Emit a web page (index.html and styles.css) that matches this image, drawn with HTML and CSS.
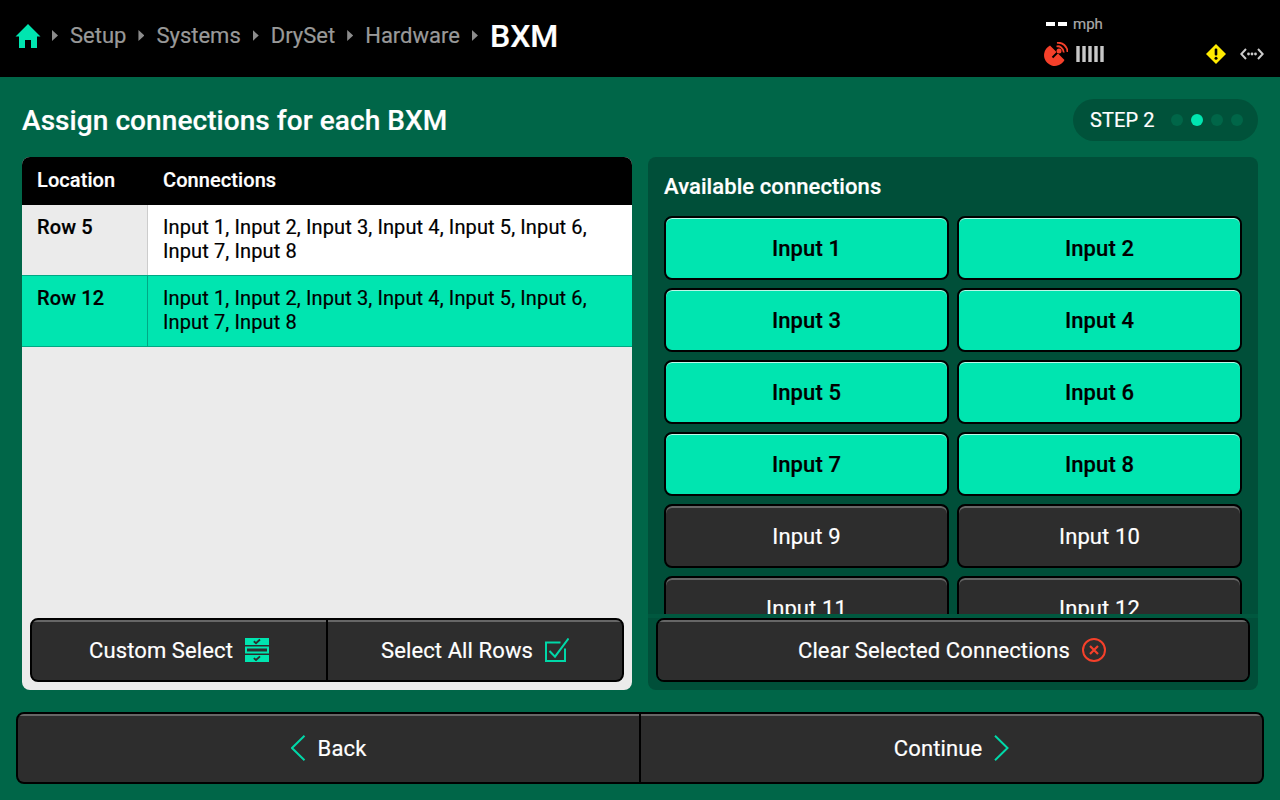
FILE: index.html
```html
<!DOCTYPE html>
<html lang="en">
<head>
<meta charset="utf-8">
<title>Assign connections</title>
<link rel="stylesheet" href="styles.css">
</head>
<body>
<div class="app">
  <header class="topbar">
    <nav class="crumbs">
      <svg class="home" viewBox="0 0 26 26" width="26" height="26"><path d="M13 1 L25.500 13.600 H22 V25 H16 V17 H10 V25 H4 V13.600 H.5 Z" fill="#00e5b0"/></svg>
      <i class="caret"></i><span class="crumb">Setup</span>
      <i class="caret"></i><span class="crumb">Systems</span>
      <i class="caret"></i><span class="crumb">DrySet</span>
      <i class="caret"></i><span class="crumb">Hardware</span>
      <i class="caret"></i><span class="crumb-current">BXM</span>
    </nav>
    <div class="status">
      <div class="gps">
        <div class="speed"><span class="dashes"><i></i><i></i></span><span>mph</span></div>
        <div class="signal">
          <svg viewBox="0 0 24 24" width="24" height="24"><path d="M6 3.500 A10.800 10.800 0 1 0 20.500 18 Z" fill="#f5402a"/><path d="M8.500 15.500 L14.500 9.500" stroke="#000" stroke-width="2"/><circle cx="15" cy="9" r="2.500" fill="#f5402a"/><path d="M12.500 4.500 C15.500 3.500 19.500 6 19.800 10.500" fill="none" stroke="#f5402a" stroke-width="1.800"/><path d="M13 .9 C18.500 0 23.500 4.500 23.500 10" fill="none" stroke="#f5402a" stroke-width="1.800"/></svg>
          <svg class="bars" viewBox="0 0 28 16" width="28" height="16"><rect x=".3" width="3.400" height="16"/><rect x="6.300" width="3.400" height="16"/><rect x="12.300" width="3.400" height="16"/><rect x="18.300" width="3.400" height="16"/><rect x="24.300" width="3.400" height="16"/></svg>
        </div>
      </div>
      <svg class="warn" viewBox="0 0 20 20" width="20" height="20"><path d="M10 0 L20 10 L10 20 L0 10 Z" fill="#ffeb00"/><rect x="8.700" y="4.500" width="2.600" height="7" rx="1" fill="#000"/><circle cx="10" cy="14.200" r="1.500" fill="#000"/></svg>
      <svg class="link" viewBox="0 0 24 12" width="24" height="12"><path d="M6 1 L1.300 6 L6 11 M18 1 L22.700 6 L18 11" fill="none" stroke="#ccc" stroke-width="2"/><circle cx="8.500" cy="6" r="1.400" fill="#ccc"/><circle cx="12" cy="6" r="1.400" fill="#ccc"/><circle cx="15.500" cy="6" r="1.400" fill="#ccc"/></svg>
    </div>
  </header>

  <main class="content">
    <div class="title-row">
      <h1 class="title">Assign connections for each BXM</h1>
      <div class="step"><span>STEP 2</span><span class="dots"><i></i><i class="on"></i><i></i><i></i></span></div>
    </div>
    <div class="panels">
      <section class="panel panel-left">
        <div class="thead"><div class="cell-a">Location</div><div class="cell-b">Connections</div></div>
        <div class="row">
          <div class="cell-a loc">Row 5</div>
          <div class="cell-b">Input 1, Input 2, Input 3, Input 4, Input 5, Input 6,<br>Input 7, Input 8</div>
        </div>
        <div class="row row-on">
          <div class="cell-a loc">Row 12</div>
          <div class="cell-b">Input 1, Input 2, Input 3, Input 4, Input 5, Input 6,<br>Input 7, Input 8</div>
        </div>
        <div class="spacer"></div>
        <div class="btn-group">
          <button class="btn">Custom Select
            <svg viewBox="0 0 24 24" width="24" height="24"><rect y="0" width="24" height="7" fill="#00e5b0"/><rect y="8.500" width="24" height="7" fill="#00e5b0"/><rect x="2" y="10.500" width="20" height="3" fill="#2d2d2d"/><rect y="17" width="24" height="7" fill="#00e5b0"/><path d="M8.800 3.300 L11 5.200 L15 1.500 M8.800 20.100 L11 22 L15 18.300" fill="none" stroke="#2d2d2d" stroke-width="1.800"/></svg>
          </button>
          <button class="btn">Select All Rows
            <svg viewBox="0 0 24 24" width="24" height="24"><path d="M20 10.500 V23 H1 V4.500 H15.500" fill="none" stroke="#00d8a8" stroke-width="2"/><path d="M4.500 13 L10 18.700 L23.500 .5" fill="none" stroke="#00d8a8" stroke-width="2"/></svg>
          </button>
        </div>
      </section>
      <section class="panel panel-right">
        <h2 class="avail">Available connections</h2>
        <div class="scroller">
          <div class="grid">
            <button class="tile tile-on">Input 1</button><button class="tile tile-on">Input 2</button>
            <button class="tile tile-on">Input 3</button><button class="tile tile-on">Input 4</button>
            <button class="tile tile-on">Input 5</button><button class="tile tile-on">Input 6</button>
            <button class="tile tile-on">Input 7</button><button class="tile tile-on">Input 8</button>
            <button class="tile">Input 9</button><button class="tile">Input 10</button>
            <button class="tile">Input 11</button><button class="tile">Input 12</button>
          </div>
        </div>
        <div class="btn-group">
          <button class="btn btn-clear">Clear Selected Connections
            <svg viewBox="0 0 24 24" width="24" height="24"><circle cx="12" cy="12" r="11" fill="none" stroke="#f5402a" stroke-width="2"/><path d="M8 8 L16 16 M16 8 L8 16" stroke="#f5402a" stroke-width="2.200"/></svg>
          </button>
        </div>
      </section>
    </div>
  </main>

  <footer class="footer">
    <button class="btn btn-lg">
      <svg viewBox="0 0 16 26" width="16" height="26"><path d="M13.500 .8 L1 13 L13.500 25.200" fill="none" stroke="#00d8a8" stroke-width="2"/></svg>
      Back
    </button>
    <button class="btn btn-lg">Continue
      <svg viewBox="0 0 16 26" width="16" height="26"><path d="M2 .8 L14.500 13 L2 25.200" fill="none" stroke="#00d8a8" stroke-width="2"/></svg>
    </button>
  </footer>
</div>
</body>
</html>
```
FILE: styles.css
```css
* { box-sizing: border-box; }
html, body { margin: 0; padding: 0; }
body { font-family: Roboto, "Liberation Sans", sans-serif; background: #006648; color: #fff; letter-spacing: .005em; -webkit-text-stroke: .2px; }
.app { width: 1280px; height: 800px; display: flex; flex-direction: column; overflow: hidden; }

.topbar { height: 77px; flex: none; background: #000; display: flex; justify-content: space-between; padding: 0 16px 0 15px; }
.crumbs { display: flex; align-items: center; height: 71px; letter-spacing: 0; }
.home { margin-right: 11px; }
.caret { width: 6px; height: 11px; background: #8c8c8c; clip-path: polygon(0 0, 100% 50%, 0 100%); margin-right: 12px; }
.crumb { font-size: 22px; color: #999; margin-right: 12px; }
.crumb-current { font-size: 32px; font-weight: 500; color: #fff; }

.status { display: flex; align-items: flex-end; padding-bottom: 11px; }
.gps { display: flex; flex-direction: column; gap: 8px; margin-right: 102px; }
.speed { display: flex; align-items: center; font-size: 15px; color: #aaa; padding-left: 2px; height: 20px; letter-spacing: 0; }
.dashes { display: flex; gap: 3px; margin-right: 6px; }
.dashes i { width: 9px; height: 4px; background: #fff; }
.signal { display: flex; align-items: center; gap: 8px; height: 24px; }
.bars { fill: #c8c8c8; }
.warn { margin-right: 14px; margin-bottom: 2px; }
.link { margin-bottom: 6px; }

.content { flex: 1; padding: 0 22px; display: flex; flex-direction: column; }
.title-row { height: 80px; display: flex; align-items: center; justify-content: space-between; padding-top: 6px; }
.title { margin: 0; font-size: 28px; font-weight: 500; letter-spacing: .07px; }
.step { width: 185px; height: 42px; border-radius: 21px; background: #00523a; display: flex; align-items: center; padding: 0 15px 0 17px; justify-content: space-between; font-size: 20px; }
.dots { display: flex; gap: 8px; }
.dots i { width: 12px; height: 12px; border-radius: 50%; background: #006648; }
.dots .on { background: #00e5b0; }

.panels { display: grid; grid-template-columns: 610px 610px; gap: 16px; height: 533px; }
.panel { border-radius: 8px; display: flex; flex-direction: column; overflow: hidden; }
.panel-left { background: #ebebeb; color: #000; }
.panel-right { background: #004f39; }

.thead { height: 48px; background: #000; color: #fff; display: flex; align-items: center; font-size: 20px; font-weight: 500; flex: none; padding-bottom: 2px; }
.cell-a { width: 126px; padding-left: 15px; flex: none; }
.cell-b { padding-left: 15px; }
.row { display: flex; height: 71px; background: #fff; font-size: 20px; line-height: 24px; border-bottom: 1px solid #00a884; flex: none; letter-spacing: .12px; }
.row .cell-a { background: #ebebeb; border-right: 1px solid #ccc; padding-top: 10px; font-weight: 500; }
.row .cell-b { padding-top: 10px; padding-left: 15px; }
.row-on, .row-on .cell-a { background: #00e5b0; }
.row-on .cell-a { border-right-color: #00a884; }
.spacer { flex: 1; }

.btn-group { display: flex; height: 64px; margin: 0 8px 8px; flex: none; border: 2px solid #000; border-radius: 8px; overflow: hidden; background: #000; gap: 2px; }
.btn { flex: 1; min-width: 0; border: 0; margin: 0; background: #2d2d2d; box-shadow: inset 0 2px 0 #666; color: #fff; font: 400 22px Roboto, sans-serif; letter-spacing: .005em; display: flex; align-items: center; justify-content: center; gap: 12px; padding: 0; }
.btn-clear { padding-right: 2px; }

.avail { margin: 0; font-size: 22px; font-weight: 500; height: 59px; padding: 17px 0 0 16px; flex: none; }
.scroller { flex: 1; overflow: hidden; padding: 0 16px; min-height: 0; border-bottom: 4px solid #00583f; }
.grid { display: grid; grid-template-columns: 285px 285px; gap: 8px; }
.tile { height: 64px; border: 2px solid #000; border-radius: 8px; background: #2d2d2d; box-shadow: inset 0 2px 0 #666; color: #fff; font: 400 22px Roboto, sans-serif; letter-spacing: .005em; padding: 0; }
.tile-on { background: #00e5b0; box-shadow: inset 0 1px 0 #bdf7e8; color: #000; font-weight: 500; }

.footer { margin: 22px 16px 16px; height: 72px; flex: none; display: flex; gap: 2px; border: 2px solid #000; border-radius: 8px; overflow: hidden; background: #000; }
.btn-lg { gap: 11px; }
```
